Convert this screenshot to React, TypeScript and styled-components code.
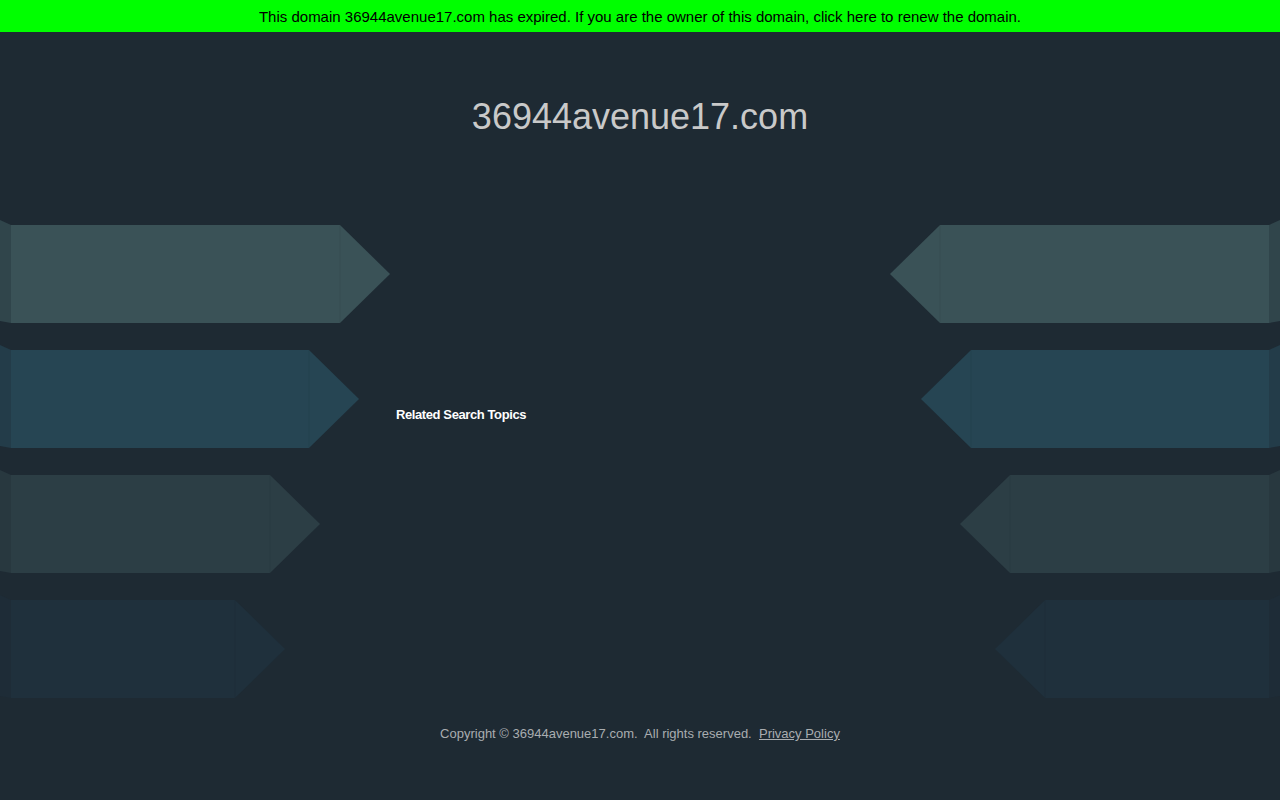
import React from "react"
import styled, { createGlobalStyle } from "styled-components"

const GlobalStyle = createGlobalStyle`
  html, body {
    margin: 0;
    padding: 0;
    background-color: #1e2a33;
    font-family: "Liberation Sans", Arial, sans-serif;
  }
`

const Page = styled.div`
  min-height: 800px;
  background-color: #1e2a33;
`

const Banner = styled.a`
  display: block;
  height: 32px;
  line-height: 34px;
  background-color: #00ff00;
  color: #000;
  font-size: 15px;
  text-align: center;
  text-decoration: none;
`

const Header = styled.div`
  padding: 64px 0 0 0;
  height: 124px;
  text-align: center;
`

const DomainTitle = styled.h1`
  margin: 0;
  font-size: 36px;
  line-height: 42px;
  font-weight: normal;
  color: #c9c9c9;
`

const Main = styled.div`
  display: grid;
  grid-template-columns: 390px 1fr 390px;
  height: 486px;
`

const ArrowColumn = styled.div<{ $side: "left" | "right" }>`
  display: flex;
  flex-direction: column;
  gap: 17px;
  align-items: ${p => (p.$side === "left" ? "flex-start" : "flex-end")};
`

const ArrowSvg = styled.svg<{ $flip: boolean }>`
  display: block;
  transform: ${p => (p.$flip ? "scaleX(-1)" : "none")};
`

const Center = styled.div`
  padding: 187px 0 0 6px;
`

const TopicsTitle = styled.div`
  font-size: 13px;
  font-weight: bold;
  color: #ffffff;
  letter-spacing: -0.4px;
`

const Footer = styled.div`
  padding-top: 20px;
  text-align: center;
  font-size: 13px;
  color: #a9adb0;
`

const PolicyLink = styled.a`
  color: #a9adb0;
  text-decoration: underline;
`

type ArrowProps = {
  width: number
  body: string
  side: string
  flip?: boolean
}

function Arrow({ width, body, side, flip = false }: ArrowProps) {
  const h = 108
  return (
    <ArrowSvg $flip={flip} width={width} height={h} viewBox={`0 0 ${width} ${h}`}>
      <polygon points={`0,0 11,5 11,103 0,101`} fill={side} />
      <polygon
        points={`11,5 ${width - 50},5 ${width},54 ${width - 50},103 11,103`}
        fill={body}
      />
      <line x1={width - 50} y1={5} x2={width - 50} y2={103} stroke="rgba(0,0,0,0.06)" strokeWidth={1} />
    </ArrowSvg>
  )
}

const rows = [
  { width: 390, body: "#3a5257", side: "#30454b" },
  { width: 359, body: "#264553", side: "#233c49" },
  { width: 320, body: "#2c3e45", side: "#28383f" },
  { width: 285, body: "#1f303c", side: "#1e2c37" }
]

export default function App() {
  return (
    <Page>
      <GlobalStyle />
      <Banner href="#">
        This domain 36944avenue17.com has expired. If you are the owner of this domain, click here to renew the domain.
      </Banner>

      <Header>
        <DomainTitle>36944avenue17.com</DomainTitle>
      </Header>

      <Main>
        <ArrowColumn $side="left">
          {rows.map((r, i) => (
            <Arrow key={i} width={r.width} body={r.body} side={r.side} />
          ))}
        </ArrowColumn>

        <Center>
          <TopicsTitle>Related Search Topics</TopicsTitle>
        </Center>

        <ArrowColumn $side="right">
          {rows.map((r, i) => (
            <Arrow key={i} width={r.width} body={r.body} side={r.side} flip />
          ))}
        </ArrowColumn>
      </Main>

      <Footer>
        Copyright © 36944avenue17.com.&nbsp; All rights reserved.&nbsp; <PolicyLink href="#">Privacy Policy</PolicyLink>
      </Footer>
    </Page>
  )
}
